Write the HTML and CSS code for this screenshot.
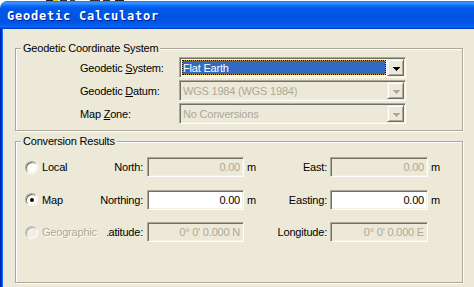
FILE: index.html
```html
<!DOCTYPE html>
<html lang="en">
<head>
<meta charset="utf-8">
<title>Geodetic Calculator</title>
<link rel="stylesheet" href="styles.css">
</head>
<body>
<div class="topstrip"></div>
<div class="titlebar"><span class="title">Geodetic Calculator</span></div>
<div class="window">
  <div class="frame-left"></div>
  <div class="client">
    <fieldset class="group g1">
      <legend>Geodetic Coordinate System</legend>
      <div class="form">
        <label class="flabel">Geodetic <u>S</u>ystem:</label>
        <div class="combo">
          <div class="combo-value"><span class="val sel">Flat Earth</span></div>
          <div class="drop"><svg width="7" height="4" viewBox="0 0 7 4"><path d="M0 0h7v1h-1v1h-1v1h-1v1h-1v-1h-1v-1h-1v-1h-1z" fill="#000"/></svg></div>
        </div>
        <label class="flabel">Geodetic <u>D</u>atum:</label>
        <div class="combo disabled">
          <div class="combo-value"><span class="val">WGS 1984 (WGS 1984)</span></div>
          <div class="drop"><svg width="7" height="4" viewBox="0 0 7 4"><path d="M0 0h7v1h-1v1h-1v1h-1v1h-1v-1h-1v-1h-1v-1h-1z" fill="#ACA899"/></svg></div>
        </div>
        <label class="flabel">Map <u>Z</u>one:</label>
        <div class="combo disabled">
          <div class="combo-value"><span class="val">No Conversions</span></div>
          <div class="drop"><svg width="7" height="4" viewBox="0 0 7 4"><path d="M0 0h7v1h-1v1h-1v1h-1v1h-1v-1h-1v-1h-1v-1h-1z" fill="#ACA899"/></svg></div>
        </div>
      </div>
    </fieldset>
    <fieldset class="group g2">
      <legend>Conversion Results</legend>
      <div class="results">
        <div class="opt"><span class="radio"></span><span>Local</span></div>
        <div class="lbl"><span>North:</span></div>
        <div class="field">0.00</div>
        <div class="unit">m</div>
        <div class="lbl"><span>East:</span></div>
        <div class="field">0.00</div>
        <div class="unit">m</div>

        <div class="opt"><span class="radio checked"></span><span>Map</span></div>
        <div class="lbl"><span>Northing:</span></div>
        <div class="field on">0.00</div>
        <div class="unit">m</div>
        <div class="lbl"><span>Easting:</span></div>
        <div class="field on">0.00</div>
        <div class="unit">m</div>

        <div class="opt off"><span class="radio"></span><span>Geographic</span></div>
        <div class="lbl clip"><span>Latitude:</span></div>
        <div class="field">0° 0' 0.000 N</div>
        <div class="unit"></div>
        <div class="lbl"><span>Longitude:</span></div>
        <div class="field">0° 0' 0.000 E</div>
        <div class="unit"></div>
      </div>
    </fieldset>
  </div>
</div>
</body>
</html>
```

FILE: styles.css
```css
html, body {
  margin: 0;
  padding: 0;
}
body {
  width: 474px;
  height: 287px;
  overflow: hidden;
  background: #fff;
  font-family: "Liberation Sans", Arial, sans-serif;
  font-size: 11px;
  letter-spacing: -0.2px;
  color: #000;
}
.topstrip {
  height: 1px;
  background: linear-gradient(to right, #fff 0 46px, #222 46px 53px, #e8d000 53px 58px, #fff 58px 60px, #333 60px 67px, #fff 67px 70px, #444 70px 75px, #fff 75px 90px, #333 90px 100px, #fff 100px 103px, #333 103px 110px, #fff 110px 115px, #222 115px 124px, #fff 124px);
}
.titlebar {
  height: 28px;
  box-sizing: border-box;
  padding: 3px 0 0 7px;
  border-top-left-radius: 7px;
  background: linear-gradient(to bottom,
    #0a5eef 0, #3d95ff 1px, #2a87ff 3px, #0866f5 5px, #0058ea 8px,
    #0054e3 16px, #0055e5 22px, #0562f2 25px, #0b69f8 26px, #0043cf 27px, #003bc0 28px);
}
.title {
  font-family: "DejaVu Sans Mono", "Liberation Mono", monospace;
  font-weight: bold;
  font-size: 12px;
  letter-spacing: 0.78px;
  line-height: 25px;
  color: #fff;
  text-shadow: 1px 1px 0 #0a1a8a;
  white-space: nowrap;
}
.window {
  display: flex;
  height: 258px;
}
.frame-left {
  width: 3px;
  flex: none;
  background: linear-gradient(to right, #0020b8 0 1px, #0831d9 1px 2px, #166aee 2px 3px);
}
.client {
  flex: 1;
  background: #ece9d8;
  padding: 13px 0 0 12px;
}
.group {
  margin: 0;
  padding: 0;
  width: 448px;
  box-sizing: border-box;
  border: 1px solid #aca899;
  box-shadow: 1px 1px 0 #fff, inset 1px 1px 0 #fff;
  min-width: 0;
}
.group legend {
  margin-left: 5px;
  padding: 0 2px;
  line-height: 13px;
  background: #ece9d8;
}
.g2 {
  margin-top: 4px;
}
.form {
  display: grid;
  grid-template-columns: 99px 227px;
  grid-auto-rows: 21px;
  row-gap: 2px;
  padding: 2px 0 6px 64px;
}
.flabel {
  display: block;
  padding-top: 1px;
  line-height: 20px;
  white-space: nowrap;
}
.combo {
  display: flex;
  box-sizing: border-box;
  height: 21px;
  padding: 1px;
  border: 1px solid;
  border-color: #aca899 #fff #fff #aca899;
  box-shadow: inset 1px 1px 0 #716f64, inset -1px -1px 0 #f1efe2;
  background: #fff;
}
.combo.disabled {
  background: #ece9d8;
  color: #aca899;
}
.combo-value {
  flex: 1;
  display: flex;
  padding: 1px;
  min-width: 0;
}
.val {
  flex: 1;
  display: block;
  padding-top: 1px;
  line-height: 13px;
  border: 1px solid transparent;
  white-space: nowrap;
  overflow: hidden;
}
.val.sel {
  background: #316ac5;
  color: #fff;
  border-color: #d8a545;
  outline: 1px dotted #000;
  outline-offset: -1px;
}
.drop {
  flex: none;
  width: 17px;
  box-sizing: border-box;
  display: flex;
  align-items: center;
  justify-content: center;
  background: #ece9d8;
  border: 1px solid;
  border-color: #f1efe2 #716f64 #716f64 #f1efe2;
  box-shadow: inset 1px 1px 0 #fff, inset -1px -1px 0 #aca899;
}
.drop svg {
  display: block;
  margin: 2px 0 0 2px;
}
.results {
  display: grid;
  grid-template-columns: 79px 39px 101px 16px 67px 101px auto;
  grid-auto-rows: 20px;
  row-gap: 12.5px;
  align-items: center;
  padding: 9px 0 40px 9px;
}
.opt {
  display: flex;
  align-items: center;
  gap: 4px;
  white-space: nowrap;
}
.opt.off {
  color: #aca899;
  text-shadow: 1px 1px 0 #fff;
}
.radio {
  flex: none;
  position: relative;
  width: 13px;
  height: 13px;
  box-sizing: border-box;
  border-radius: 50%;
  border: 1px solid;
  border-color: #aca899 #fff #fff #aca899;
  box-shadow: inset 1px 1px 0 #716f64, inset -1px -1px 0 #f1efe2;
  background: #fff;
}
.opt.off .radio {
  background: #f1efe8;
  border-color: #c9c6b8 #fff #fff #c9c6b8;
  box-shadow: inset 1px 1px 0 #aca899, inset -1px -1px 0 #f1efe2;
}
.radio.checked::after {
  content: "";
  position: absolute;
  left: 3.5px;
  top: 3.5px;
  width: 4px;
  height: 4px;
  border-radius: 50%;
  background: #000;
}
.lbl {
  display: flex;
  justify-content: flex-end;
  white-space: nowrap;
  line-height: 20px;
}
.lbl.clip {
  overflow: hidden;
  clip-path: inset(0 0 0 3px);
}
.field {
  margin-left: 4px;
  height: 20px;
  box-sizing: border-box;
  border: 1px solid;
  border-color: #aca899 #fff #fff #aca899;
  box-shadow: inset 1px 1px 0 #716f64, inset -1px -1px 0 #f1efe2;
  background: #ece9d8;
  color: #aca899;
  text-align: right;
  padding-right: 3px;
  line-height: 18px;
  white-space: nowrap;
  overflow: hidden;
}
.results .field:nth-child(7n+6) {
  margin-left: 3px;
}
.field.on {
  background: #fff;
  color: #000;
}
.unit {
  padding-left: 3px;
  line-height: 20px;
}
```
